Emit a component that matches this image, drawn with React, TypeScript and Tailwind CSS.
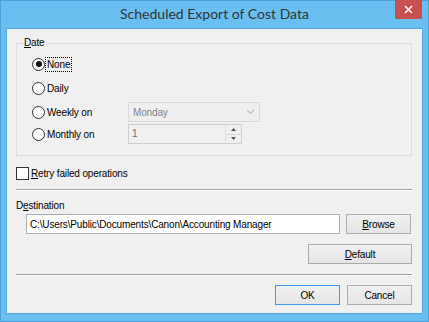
import { useState } from 'react';

const ui = { fontFamily: '"Liberation Sans", Arial, sans-serif' };
const title = { fontFamily: 'Lato, "Open Sans", sans-serif' };

function Radio({ checked, label, focused }: { checked?: boolean; label: string; focused?: boolean }) {
  return (
    <div className="flex items-center">
      <span className="w-[13px] h-[13px] rounded-full border border-[#333] bg-white flex items-center justify-center">
        {checked && <span className="w-[6px] h-[6px] rounded-full bg-[#111]" />}
      </span>
      <span
        className={
          'ml-[1px] px-[1px] leading-[13px] text-black ' +
          (focused ? 'outline outline-1 outline-dotted outline-black' : '')
        }
      >
        {label}
      </span>
    </div>
  );
}

function Button({ children, primary, className }: { children: React.ReactNode; primary?: boolean; className?: string }) {
  return (
    <button
      className={
        'h-[20px] text-[10px] tracking-[-0.15px] text-black bg-gradient-to-b from-[#f0f0f0] to-[#e5e5e5] border ' +
        (primary ? 'border-[#3c9bee]' : 'border-[#acacac]') +
        ' ' +
        (className ?? '')
      }
    >
      {children}
    </button>
  );
}

function Separator({ className }: { className?: string }) {
  return (
    <div className={'mr-[10px] ' + (className ?? '')}>
      <div className="h-px bg-[#a0a0a0]" />
      <div className="h-px bg-white" />
    </div>
  );
}

export default function App() {
  const [retry, setRetry] = useState(false);

  return (
    <div
      className="w-[429px] h-[322px] bg-[#69bff0] border border-[#4d9fd8] relative flex flex-col text-[10px] tracking-[-0.15px]"
      style={ui}
    >
      {/* title bar */}
      <div className="h-[27px] flex items-center justify-center">
        <span className="text-[14px] tracking-normal text-[#333] pb-[2px]" style={title}>
          Scheduled Export of Cost Data
        </span>
      </div>
      <div className="absolute -top-px right-[6px] w-[27px] h-[19px] bg-[#c75050] flex items-center justify-center">
        <svg width="9" height="9" viewBox="0 0 9 9">
          <path d="M1 1 L8 8 M8 1 L1 8" stroke="white" strokeWidth="1.6" />
        </svg>
      </div>

      {/* client area */}
      <div className="mx-[5px] h-[286px] bg-[#f0f0f0] border border-[#5aa7dc] flex flex-col">
        {/* Date group */}
        <div className="relative mt-[14px] ml-[9px] mr-[10px] h-[113px] border border-[#dcdcdc]">
          <span className="absolute -top-[8px] left-[6px] px-[1px] bg-[#f0f0f0] leading-[13px] text-black">
            <span className="underline">D</span>ate
          </span>
          <div className="pt-[8px] flex flex-col">
            <div className="h-[24px] flex items-center pl-[15px]">
              <Radio checked focused label="None" />
            </div>
            <div className="h-[24px] flex items-center pl-[15px]">
              <Radio label="Daily" />
            </div>
            <div className="h-[24px] flex items-center">
              <div className="w-[111px] pl-[15px]">
                <Radio label="Weekly on" />
              </div>
              <div className="w-[132px] h-[20px] border border-[#d9d9d9] bg-[#efefef] flex items-center pl-[4px] pr-[4px]">
                <span className="flex-1 text-[#838383]">Monday</span>
                <svg width="9" height="6" viewBox="0 0 9 6">
                  <path d="M1 1 L4.5 4.5 L8 1" fill="none" stroke="#bcbcbc" strokeWidth="1.2" />
                </svg>
              </div>
            </div>
            <div className="h-[20px] flex items-center">
              <div className="w-[111px] pl-[15px]">
                <Radio label="Monthly on" />
              </div>
              <div className="w-[114px] h-[20px] border border-[#cfcfcf] bg-[#f0f0f0] flex">
                <span className="flex-1 text-[#6d6d6d] pl-[3px] leading-[18px]">1</span>
                <div className="w-[16px] flex flex-col border-l border-[#e2e2e2]">
                  <div className="flex-1 flex items-center justify-center border-b border-[#d8d8d8]">
                    <svg width="5" height="3" viewBox="0 0 5 3">
                      <path d="M0 3 L2.5 0 L5 3 Z" fill="#555" />
                    </svg>
                  </div>
                  <div className="flex-1 flex items-center justify-center">
                    <svg width="5" height="3" viewBox="0 0 5 3">
                      <path d="M0 0 L2.5 3 L5 0 Z" fill="#555" />
                    </svg>
                  </div>
                </div>
              </div>
            </div>
          </div>
        </div>

        {/* Retry */}
        <div className="mt-[11px] ml-[9px] flex items-center cursor-default" onClick={() => setRetry(!retry)}>
          <span className="w-[13px] h-[13px] border border-[#333] bg-white flex items-center justify-center">
            {retry && (
              <svg width="9" height="9" viewBox="0 0 9 9">
                <path d="M1 4.5 L3.5 7 L8 1.5" fill="none" stroke="#111" strokeWidth="1.5" />
              </svg>
            )}
          </span>
          <span className="ml-[2px] leading-[13px] text-black">
            <span className="underline">R</span>etry failed operations
          </span>
        </div>

        <Separator className="mt-[9px] ml-[9px]" />

        {/* Destination */}
        <div className="mt-[8px] ml-[9px] leading-[13px] text-black">
          D<span className="underline">e</span>stination
        </div>
        <div className="mt-[2px] ml-[19px] mr-[10px] flex gap-[6px]">
          <div className="w-[314px] h-[20px] bg-white border border-[#abadb3] flex items-center pl-[3px] text-black">
            C:\Users\Public\Documents\Canon\Accounting Manager
          </div>
          <Button className="w-[65px]">
            <span className="underline">B</span>rowse
          </Button>
        </div>
        <div className="mt-[10px] mr-[10px] flex justify-end">
          <Button className="w-[104px]">
            <span className="underline">D</span>efault
          </Button>
        </div>

        <Separator className="mt-[10px] ml-[9px]" />

        <div className="mt-[9px] mr-[10px] flex justify-end gap-[7px]">
          <Button primary className="w-[65px]">
            OK
          </Button>
          <Button className="w-[65px]">Cancel</Button>
        </div>
      </div>
    </div>
  );
}
